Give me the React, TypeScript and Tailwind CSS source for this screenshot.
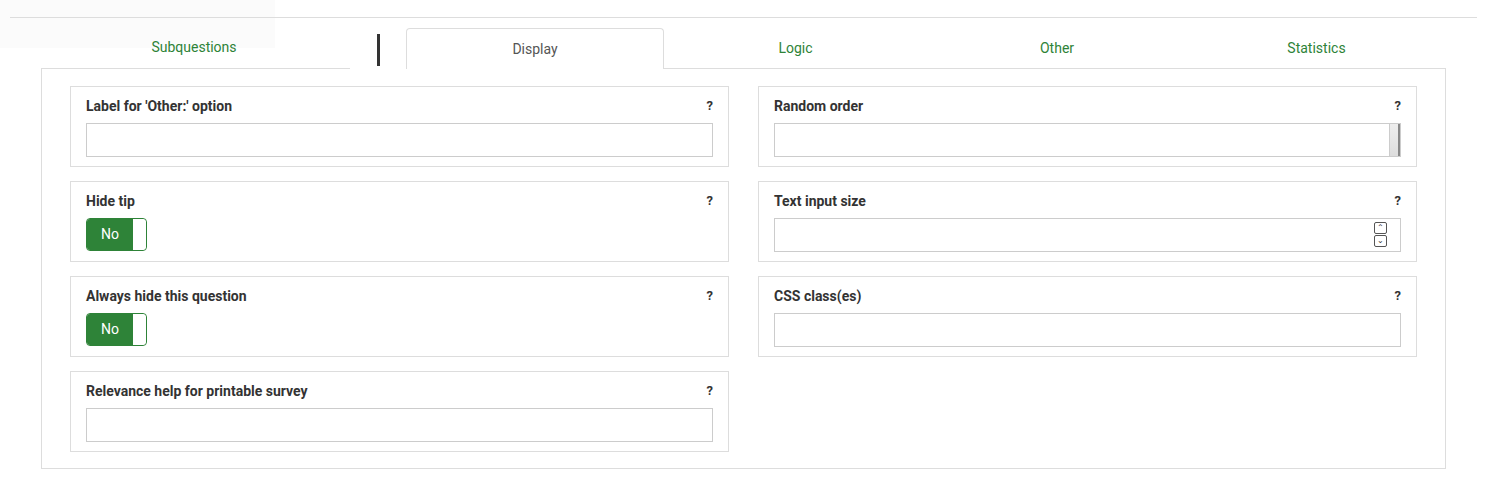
import React from "react";

const Q = () => <span className="font-bold text-[13px] text-[#333]">?</span>;

function Card({ label, children }: { label: string; children: React.ReactNode }) {
  return (
    <div className="border border-[#ddd] h-[81px] px-[15px] pt-[10px]">
      <div className="flex justify-between items-center h-[18px] pr-[0px]">
        <span className="font-bold text-[14px] text-[#333]">{label}</span>
        <Q />
      </div>
      <div className="mt-[8px]">{children}</div>
    </div>
  );
}

const Input = ({ extra }: { extra?: React.ReactNode }) => (
  <div className="h-[34px] border border-[#ccc] relative">{extra}</div>
);

const Toggle = () => (
  <div className="w-[61px] h-[33px] rounded-[4px] border border-[#2e8338] flex overflow-hidden">
    <div className="w-[46px] bg-[#2e8338] text-white text-[14px] flex items-center justify-center">No</div>
    <div className="flex-1 bg-white rounded-[4px]" />
  </div>
);

export default function App() {
  return (
    <div className="w-[1487px] h-[487px] bg-white relative" style={{ fontFamily: "Roboto, 'Liberation Sans', sans-serif" }}>
      <div className="absolute left-0 top-0 w-[275px] h-[48px] bg-[#fbfbfb]" />
      <div className="pt-[17px] px-[10px] relative">
        <div className="border-t border-[#ddd]" />
      </div>
      <div className="px-[41px] mt-[10px] relative">
        <div className="flex h-[41px] items-end">
          <div className="w-[309px] h-[41px] border-b border-[#ddd] flex items-center justify-center text-[14px] text-[#2e8338] pl-[0px]">
            <span className="-ml-[3px] -mt-[2px]">Subquestions</span>
          </div>
          <div className="w-[56px] h-[41px] flex items-start pl-[27px] pt-[6px]">
            <div className="w-[3px] h-[32px] bg-[#333]" />
          </div>
          <div className="w-[258px] h-[41px] border border-b-0 border-[#ddd] rounded-t-[4px] flex items-center justify-center text-[14px] text-[#555] bg-white">Display</div>
          <div className="flex-1 flex h-[41px] border-b border-[#ddd] text-[14px] text-[#2e8338]">
            <div className="w-[263px] flex items-center justify-center">Logic</div>
            <div className="w-[260px] flex items-center justify-center">Other</div>
            <div className="flex-1 flex items-center justify-center">Statistics</div>
          </div>
        </div>
        <div className="border border-t-0 border-[#ddd] h-[400px] px-[28px] pt-[17px]">
          <div className="grid grid-cols-2 gap-x-[29px]">
            <div className="flex flex-col gap-[14px]">
              <Card label="Label for 'Other:' option"><Input /></Card>
              <Card label="Hide tip"><Toggle /></Card>
              <Card label="Always hide this question"><Toggle /></Card>
              <Card label="Relevance help for printable survey"><Input /></Card>
            </div>
            <div className="flex flex-col gap-[14px]">
              <Card label="Random order">
                <Input extra={<div className="absolute right-0 top-0 bottom-0 w-[11px] bg-gradient-to-b from-[#eee] to-[#ddd] border-l border-[#ccc] border-r-2 border-r-[#888]" />} />
              </Card>
              <Card label="Text input size">
                <Input extra={
                  <div className="absolute right-[13px] top-[3px] flex flex-col gap-[1px]">
                    <div className="w-[13px] h-[12px] border border-[#555] rounded-[2px] text-[8px] leading-[10px] text-center text-[#333]">⌃</div>
                    <div className="w-[13px] h-[12px] border border-[#555] rounded-[2px] text-[8px] leading-[10px] text-center text-[#333]">⌄</div>
                  </div>
                } />
              </Card>
              <Card label="CSS class(es)"><Input /></Card>
            </div>
          </div>
        </div>
      </div>
    </div>
  );
}
